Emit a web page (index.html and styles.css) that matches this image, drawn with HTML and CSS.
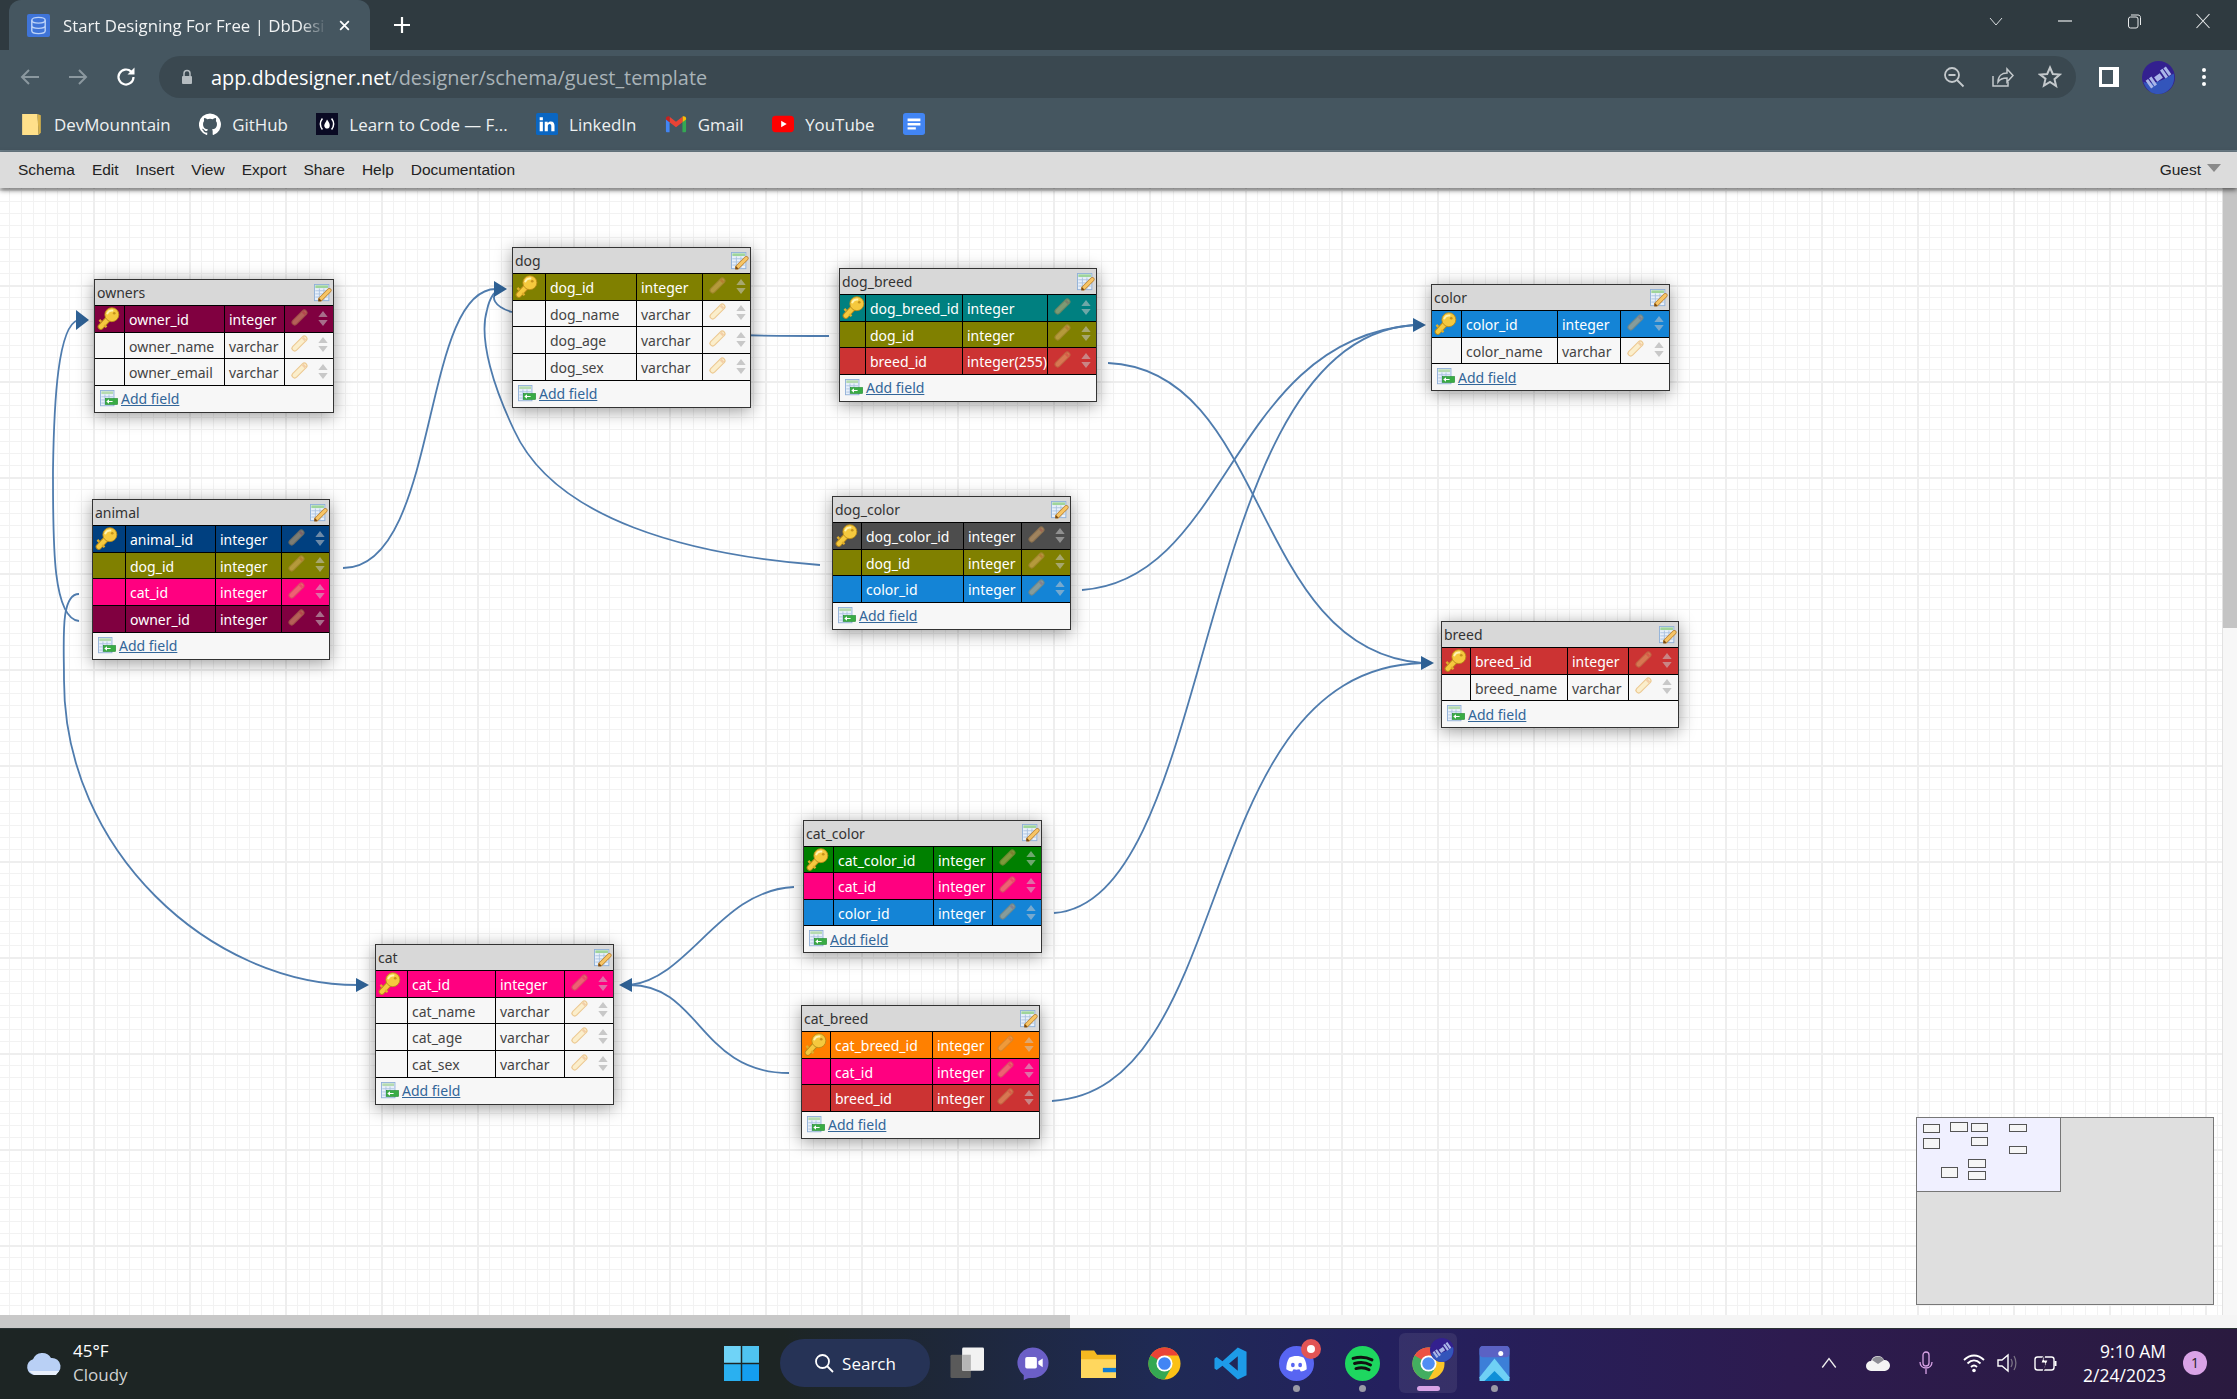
FILE: index.html
```html
<!DOCTYPE html>
<html lang="en">
<head>
    <meta charset="UTF-8">
    <meta name="viewport" content="width=device-width, initial-scale=1.0">
    <title>Start Designing For Free | DbDesigner</title>
    <link rel="stylesheet" href="styles.css">
</head>
<body>
    <!-- icon sprite -->
    <svg class="sprite" width="0" height="0">
        <symbol id="key" viewBox="0 0 24 24">
            <path d="M12 12L4 20.500" stroke="#b98a18" stroke-width="6.500" stroke-linecap="round"/>
            <path d="M12 12L4 20.500" stroke="#f5c93e" stroke-width="4.600" stroke-linecap="round"/>
            <path d="M7.500 19l2.500 2M4.500 15.500l-2-2" stroke="#e0ae2a" stroke-width="2.400"/>
            <circle cx="15.500" cy="8" r="7.300" fill="#f5c93e" stroke="#b98a18" stroke-width=".9"/>
            <path d="M10.500 7.500c1-3 3.500-4.300 6.500-3.800" fill="none" stroke="#fff3b0" stroke-width="2"/>
            <circle cx="18" cy="6.500" r="1.400" fill="#c4921c"/>
        </symbol>
        <symbol id="pen" viewBox="0 0 16 16">
            <path class="pen-edge" d="M3.500 12.500L12.500 3.500" stroke-width="6" stroke-linecap="round"/>
            <path class="pen-body" d="M3.500 12.500L12.500 3.500" stroke-width="4" stroke-linecap="round"/>
            <path class="pen-tip" d="M11 2.500l2.500 2.500" stroke-width="2.400"/>
        </symbol>
        <symbol id="updown" viewBox="0 0 10 16">
            <path d="M5 0l5 6.500H0zM5 16l-5-6.500h10z" fill="#c8c8c8"/>
        </symbol>
        <symbol id="tbledit" viewBox="0 0 20 20">
            <rect x=".5" y=".5" width="16" height="18" fill="#e8f0fa" stroke="#8fb0d8"/>
            <rect x="1.500" y="1.500" width="14" height="3" fill="#9fd59a"/>
            <path d="M1.500 7.500h14M1.500 11h14M1.500 14.500h14M6 5v13M11 5v13" stroke="#a9c2e0" stroke-width="1"/>
            <path d="M7 17L17 7" stroke="#b98032" stroke-width="5" stroke-linecap="round"/>
            <path d="M7 17L17 7" stroke="#f7c566" stroke-width="3.400" stroke-linecap="round"/>
            <path d="M4.500 19.500l1-4 3 3z" fill="#7a4a12"/>
        </symbol>
        <symbol id="addrow" viewBox="0 0 20 20">
            <rect x=".5" y=".5" width="15" height="17" fill="#e8f0fa" stroke="#8fb0d8"/>
            <rect x="1.500" y="1.500" width="13" height="3" fill="#b5dbb0"/>
            <path d="M1.500 7.500h13M1.500 11h13M1.500 14.500h13M5.500 5v12M10 5v12" stroke="#a9c2e0" stroke-width="1"/>
            <rect x="6" y="9.500" width="13.500" height="6.500" fill="#39ac45" stroke="#1f8a2c" stroke-width=".7"/>
            <path d="M7 12.750l3-2.500v5zM10 12.250h4v1h-4z" fill="#fff"/>
        </symbol>
        <symbol id="chrome" viewBox="0 0 24 24">
            <circle cx="12" cy="12" r="11" fill="#fbc116"/>
            <path d="M2.470 6.500A11 11 0 0 1 21.530 6.500H12L7.240 14.750z" fill="#ea4335"/>
            <path d="M2.470 6.500A11 11 0 0 0 12 23L16.760 14.750 12 12z" fill="#34a853"/>
            <circle cx="12" cy="12" r="5.500" fill="#fff"/>
            <circle cx="12" cy="12" r="4.300" fill="#4285f4"/>
        </symbol>
        <symbol id="nasa" viewBox="0 0 24 24">
            <circle cx="12" cy="12" r="12" fill="#33208f"/>
            <path d="M1 15c6 3 16-2 22-6 2 8-4 15-11 15C7 24 3 21 1 15z" fill="#3355bb"/>
            <g transform="rotate(-35 12 12)" fill="#aab6e8">
                <rect x="3" y="8.500" width="2.200" height="7"/>
                <rect x="6" y="8.500" width="2.200" height="7"/>
                <rect x="9.500" y="10" width="5" height="4"/>
                <rect x="15.800" y="8.500" width="2.200" height="7"/>
                <rect x="18.800" y="8.500" width="2.200" height="7"/>
            </g>
        </symbol>
    </svg>

    <div class="tabstrip">
        <div class="tab">
            <svg class="tab-icon" viewBox="0 0 24 24"><rect width="24" height="24" rx="2" fill="#3f74d8"/><ellipse cx="12" cy="6.500" rx="7" ry="3" fill="none" stroke="#bcd2f7" stroke-width="1.500"/><path d="M5 6.500v11c0 1.700 3 3 7 3s7-1.300 7-3v-11M5 12c0 1.700 3 3 7 3s7-1.300 7-3" fill="none" stroke="#bcd2f7" stroke-width="1.500"/></svg>
            <span class="tab-title">Start Designing For Free | DbDesi</span>
            <svg class="tab-close" viewBox="0 0 12 12"><path d="M2 2l8 8M10 2l-8 8" stroke="#fff" stroke-width="1.600"/></svg>
        </div>
        <svg class="new-tab" viewBox="0 0 18 18"><path d="M9 1v16M1 9h16" stroke="#fff" stroke-width="2.200"/></svg>
        <div class="winctl">
            <svg viewBox="0 0 16 16"><path d="M2 5l6 7 6-7" fill="none" stroke="#d8dcde" stroke-width="1"/></svg>
            <svg viewBox="0 0 16 16"><path d="M1 8h14" stroke="#e8eaeb" stroke-width="1.200"/></svg>
            <svg viewBox="0 0 16 16"><rect x="2.500" y="4" width="9.500" height="11" rx="2" fill="none" stroke="#e8eaeb"/><path d="M5 2h7c1.500 0 2.500 1 2.500 2.500V12" fill="none" stroke="#e8eaeb"/></svg>
            <svg viewBox="0 0 16 16"><path d="M1.500 1l13 14M14.500 1l-13 14" stroke="#e8eaeb" stroke-width="1.100"/></svg>
        </div>
    </div>

    <div class="toolbar">
        <svg class="nav dim" viewBox="0 0 24 24"><path d="M21 12H4M11 5l-7 7 7 7" fill="none" stroke="#8b989f" stroke-width="2"/></svg>
        <svg class="nav dim" viewBox="0 0 24 24"><path d="M3 12h17M13 5l7 7-7 7" fill="none" stroke="#8b989f" stroke-width="2"/></svg>
        <svg class="nav" viewBox="0 0 24 24"><path d="M19.500 12a7.500 7.500 0 1 1-2.300-5.400" fill="none" stroke="#fff" stroke-width="2.200"/><path d="M20.500 2.500v7h-7z" fill="#fff"/></svg>
        <div class="omnibox">
            <svg class="lock" viewBox="0 0 12 16"><path d="M3 7V4.500a3 3 0 0 1 6 0V7" fill="none" stroke="#b5bcc0" stroke-width="1.500"/><rect x="1" y="7" width="10" height="8" rx="1" fill="#b5bcc0"/></svg>
            <span class="url"><span class="host">app.dbdesigner.net</span>/designer/schema/guest_template</span>
            <div class="omni-icons">
                <svg viewBox="0 0 24 24"><circle cx="10" cy="10" r="7" fill="none" stroke="#c4c9cc" stroke-width="1.800"/><path d="M6.500 10h7M15 15l6.500 6.500" stroke="#c4c9cc" stroke-width="1.800"/></svg>
                <svg viewBox="0 0 24 24"><path d="M3 11v10h15v-4" fill="none" stroke="#c4c9cc" stroke-width="1.500"/><path d="M8 17c0-6 4-9 9-9V4l6 6.500-6 6.500v-4c-4 0-7 1-9 4z" fill="none" stroke="#c4c9cc" stroke-width="1.500"/></svg>
                <svg viewBox="0 0 24 24"><path d="M12 2.500l2.800 6.500 7 .6-5.300 4.600 1.600 6.900L12 17l-6.100 3.600 1.600-6.900L2.200 9.600l7-.6z" fill="none" stroke="#c4c9cc" stroke-width="2"/></svg>
            </div>
        </div>
        <svg class="sidepanel" viewBox="0 0 20 20"><path d="M0 0h20v20H0zM3 3v14h11V3z" fill="#fff" fill-rule="evenodd"/></svg>
        <svg class="avatar"><use href="#nasa"/></svg>
        <svg class="kebab" viewBox="0 0 6 20"><circle cx="3" cy="3" r="2" fill="#fff"/><circle cx="3" cy="10" r="2" fill="#fff"/><circle cx="3" cy="17" r="2" fill="#fff"/></svg>
    </div>

    <div class="bookmarks">
        <div class="bm"><svg viewBox="0 0 18 20"><path d="M0 1h14l1 19H0z" fill="#ffe08a"/><path d="M14 1l3 1v16l-2 2z" fill="#d8b24a"/></svg>DevMounntain</div>
        <div class="bm"><svg viewBox="0 0 24 24"><path fill="#fff" d="M12 .5a12 12 0 0 0-3.800 23.400c.6.100.8-.3.800-.6v-2c-3.300.7-4-1.600-4-1.600-.5-1.400-1.300-1.800-1.300-1.800-1.100-.7.100-.7.100-.7 1.200.1 1.800 1.200 1.800 1.200 1.100 1.800 2.800 1.300 3.500 1 .1-.8.400-1.300.8-1.600-2.700-.3-5.500-1.300-5.500-5.900 0-1.300.5-2.400 1.200-3.200-.1-.3-.5-1.500.1-3.200 0 0 1-.3 3.300 1.200a11.500 11.500 0 0 1 6 0c2.300-1.500 3.300-1.200 3.300-1.200.7 1.700.2 2.900.1 3.200.8.800 1.200 1.900 1.200 3.200 0 4.600-2.800 5.600-5.500 5.900.4.400.8 1.100.8 2.200v3.300c0 .3.200.7.800.6A12 12 0 0 0 12 .5z"/></svg>GitHub</div>
        <div class="bm"><svg viewBox="0 0 24 24"><rect width="24" height="24" fill="#0a0a23"/><path d="M7 6C4 10 4 14 7 18M17 6c3 4 3 8 0 12" fill="none" stroke="#fff" stroke-width="1.600"/><path d="M12 7c2 3 3 4 3 6.500S13.500 17 12 17s-3-1.500-3-3.500S11 10 12 7z" fill="#fff"/></svg>Learn to Code — F...</div>
        <div class="bm"><svg viewBox="0 0 24 24"><rect width="24" height="24" rx="2" fill="#0a66c2"/><path d="M4 9.500h3.500V20H4zM4 4.500h3.500V8H4zM9.500 9.500h3.200V11c.8-1.100 2-1.800 3.500-1.800 3 0 4 2 4 4.800v6h-3.500v-5.500c0-1.500-.5-2.500-1.800-2.500s-2 1-2 2.500V20H9.500z" fill="#fff"/></svg>LinkedIn</div>
        <div class="bm"><svg viewBox="0 0 24 20"><path d="M1 4v14c0 .6.400 1 1 1h3V8z" fill="#4285f4"/><path d="M23 4v14c0 .6-.4 1-1 1h-3V8z" fill="#34a853"/><path d="M19 2v6l4-3V4c0-2-2.500-3-4-2z" fill="#fbbc04"/><path d="M5 8l7 5.500L19 8V2l-7 5.500L5 2z" fill="#ea4335"/><path d="M1 4c0-2 2.500-3 4-2v6L1 5z" fill="#c5221f"/></svg>Gmail</div>
        <div class="bm"><svg viewBox="0 0 24 24"><rect y="3" width="24" height="18" rx="4" fill="#f00"/><path d="M10 8.500l6 3.500-6 3.500z" fill="#fff"/></svg>YouTube</div>
        <div class="bm"><svg viewBox="0 0 24 24"><rect width="24" height="24" rx="3" fill="#4285f4"/><path d="M5 6h14v3H5zM5 11h14v2.500H5zM5 15.500h9V18H5z" fill="#fff"/></svg></div>
    </div>

    <div class="menubar">
        <span>Schema</span><span>Edit</span><span>Insert</span><span>View</span><span>Export</span><span>Share</span><span>Help</span><span>Documentation</span>
        <span class="guest">Guest<i class="caret"></i></span>
    </div>

    <div class="workspace">
        <div class="canvas">
            <svg class="links" viewBox="0 188 2222 1127" width="2222" height="1127">
                <path d="M79 621C52 618 53 540 53 470C54 400 58 326 78 320"/>
                <path d="M79 594C60 594 64 640 64 680C64 850 210 985 358 985"/>
                <path d="M343 568C440 568 420 289 496 289"/>
                <path d="M820 565C690 555 555 520 514 430C495 390 478 340 487 310C490 296 496 290 500 289"/>
                <path d="M829 336C700 336 580 332 512 312C495 307 488 297 500 289"/>
                <path d="M1108 363C1270 370 1250 650 1422 663"/>
                <path d="M1052 1101C1240 1090 1190 670 1422 663"/>
                <path d="M1082 590C1230 580 1230 340 1414 325"/>
                <path d="M1054 913C1220 900 1190 340 1414 325"/>
                <path d="M794 887C720 890 690 978 630 985"/>
                <path d="M789 1073C700 1073 700 985 630 985"/>
                <g class="heads">
                    <path d="M89 320l-13-10v20z"/>
                    <path d="M369 985l-13-7v14z"/>
                    <path d="M507 289l-13-8v16z"/>
                    <path d="M1426 325l-13-7v14z"/>
                    <path d="M1434 663l-13-7v14z"/>
                    <path d="M619 985l13-7v14z"/>
                </g>
            </svg>

            <div class="tbl t-owners">
                <div class="tbl-head">owners<svg class="ico-edit"><use href="#tbledit"/></svg></div>
                <div class="row maroon"><div class="c-key"><svg><use href="#key"/></svg></div><div>owner_id</div><div>integer</div><div class="c-act"><svg class="pen"><use href="#pen"/></svg><svg class="ud"><use href="#updown"/></svg></div></div>
                <div class="row"><div class="c-key"></div><div>owner_name</div><div>varchar</div><div class="c-act"><svg class="pen"><use href="#pen"/></svg><svg class="ud"><use href="#updown"/></svg></div></div>
                <div class="row"><div class="c-key"></div><div>owner_email</div><div>varchar</div><div class="c-act"><svg class="pen"><use href="#pen"/></svg><svg class="ud"><use href="#updown"/></svg></div></div>
                <div class="tbl-foot"><svg><use href="#addrow"/></svg><a>Add field</a></div>
            </div>

            <div class="tbl t-animal">
                <div class="tbl-head">animal<svg class="ico-edit"><use href="#tbledit"/></svg></div>
                <div class="row navy"><div class="c-key"><svg><use href="#key"/></svg></div><div>animal_id</div><div>integer</div><div class="c-act"><svg class="pen"><use href="#pen"/></svg><svg class="ud"><use href="#updown"/></svg></div></div>
                <div class="row olive"><div class="c-key"></div><div>dog_id</div><div>integer</div><div class="c-act"><svg class="pen"><use href="#pen"/></svg><svg class="ud"><use href="#updown"/></svg></div></div>
                <div class="row pink"><div class="c-key"></div><div>cat_id</div><div>integer</div><div class="c-act"><svg class="pen"><use href="#pen"/></svg><svg class="ud"><use href="#updown"/></svg></div></div>
                <div class="row maroon"><div class="c-key"></div><div>owner_id</div><div>integer</div><div class="c-act"><svg class="pen"><use href="#pen"/></svg><svg class="ud"><use href="#updown"/></svg></div></div>
                <div class="tbl-foot"><svg><use href="#addrow"/></svg><a>Add field</a></div>
            </div>

            <div class="tbl t-dog">
                <div class="tbl-head">dog<svg class="ico-edit"><use href="#tbledit"/></svg></div>
                <div class="row olive"><div class="c-key"><svg><use href="#key"/></svg></div><div>dog_id</div><div>integer</div><div class="c-act"><svg class="pen"><use href="#pen"/></svg><svg class="ud"><use href="#updown"/></svg></div></div>
                <div class="row"><div class="c-key"></div><div>dog_name</div><div>varchar</div><div class="c-act"><svg class="pen"><use href="#pen"/></svg><svg class="ud"><use href="#updown"/></svg></div></div>
                <div class="row"><div class="c-key"></div><div>dog_age</div><div>varchar</div><div class="c-act"><svg class="pen"><use href="#pen"/></svg><svg class="ud"><use href="#updown"/></svg></div></div>
                <div class="row"><div class="c-key"></div><div>dog_sex</div><div>varchar</div><div class="c-act"><svg class="pen"><use href="#pen"/></svg><svg class="ud"><use href="#updown"/></svg></div></div>
                <div class="tbl-foot"><svg><use href="#addrow"/></svg><a>Add field</a></div>
            </div>

            <div class="tbl t-dog-breed">
                <div class="tbl-head">dog_breed<svg class="ico-edit"><use href="#tbledit"/></svg></div>
                <div class="row teal"><div class="c-key"><svg><use href="#key"/></svg></div><div>dog_breed_id</div><div>integer</div><div class="c-act"><svg class="pen"><use href="#pen"/></svg><svg class="ud"><use href="#updown"/></svg></div></div>
                <div class="row olive"><div class="c-key"></div><div>dog_id</div><div>integer</div><div class="c-act"><svg class="pen"><use href="#pen"/></svg><svg class="ud"><use href="#updown"/></svg></div></div>
                <div class="row red"><div class="c-key"></div><div>breed_id</div><div>integer(255)</div><div class="c-act"><svg class="pen"><use href="#pen"/></svg><svg class="ud"><use href="#updown"/></svg></div></div>
                <div class="tbl-foot"><svg><use href="#addrow"/></svg><a>Add field</a></div>
            </div>

            <div class="tbl t-color">
                <div class="tbl-head">color<svg class="ico-edit"><use href="#tbledit"/></svg></div>
                <div class="row blue"><div class="c-key"><svg><use href="#key"/></svg></div><div>color_id</div><div>integer</div><div class="c-act"><svg class="pen"><use href="#pen"/></svg><svg class="ud"><use href="#updown"/></svg></div></div>
                <div class="row"><div class="c-key"></div><div>color_name</div><div>varchar</div><div class="c-act"><svg class="pen"><use href="#pen"/></svg><svg class="ud"><use href="#updown"/></svg></div></div>
                <div class="tbl-foot"><svg><use href="#addrow"/></svg><a>Add field</a></div>
            </div>

            <div class="tbl t-dog-color">
                <div class="tbl-head">dog_color<svg class="ico-edit"><use href="#tbledit"/></svg></div>
                <div class="row gray"><div class="c-key"><svg><use href="#key"/></svg></div><div>dog_color_id</div><div>integer</div><div class="c-act"><svg class="pen"><use href="#pen"/></svg><svg class="ud"><use href="#updown"/></svg></div></div>
                <div class="row olive"><div class="c-key"></div><div>dog_id</div><div>integer</div><div class="c-act"><svg class="pen"><use href="#pen"/></svg><svg class="ud"><use href="#updown"/></svg></div></div>
                <div class="row blue"><div class="c-key"></div><div>color_id</div><div>integer</div><div class="c-act"><svg class="pen"><use href="#pen"/></svg><svg class="ud"><use href="#updown"/></svg></div></div>
                <div class="tbl-foot"><svg><use href="#addrow"/></svg><a>Add field</a></div>
            </div>

            <div class="tbl t-breed">
                <div class="tbl-head">breed<svg class="ico-edit"><use href="#tbledit"/></svg></div>
                <div class="row red"><div class="c-key"><svg><use href="#key"/></svg></div><div>breed_id</div><div>integer</div><div class="c-act"><svg class="pen"><use href="#pen"/></svg><svg class="ud"><use href="#updown"/></svg></div></div>
                <div class="row"><div class="c-key"></div><div>breed_name</div><div>varchar</div><div class="c-act"><svg class="pen"><use href="#pen"/></svg><svg class="ud"><use href="#updown"/></svg></div></div>
                <div class="tbl-foot"><svg><use href="#addrow"/></svg><a>Add field</a></div>
            </div>

            <div class="tbl t-cat-color">
                <div class="tbl-head">cat_color<svg class="ico-edit"><use href="#tbledit"/></svg></div>
                <div class="row green"><div class="c-key"><svg><use href="#key"/></svg></div><div>cat_color_id</div><div>integer</div><div class="c-act"><svg class="pen"><use href="#pen"/></svg><svg class="ud"><use href="#updown"/></svg></div></div>
                <div class="row pink"><div class="c-key"></div><div>cat_id</div><div>integer</div><div class="c-act"><svg class="pen"><use href="#pen"/></svg><svg class="ud"><use href="#updown"/></svg></div></div>
                <div class="row blue"><div class="c-key"></div><div>color_id</div><div>integer</div><div class="c-act"><svg class="pen"><use href="#pen"/></svg><svg class="ud"><use href="#updown"/></svg></div></div>
                <div class="tbl-foot"><svg><use href="#addrow"/></svg><a>Add field</a></div>
            </div>

            <div class="tbl t-cat">
                <div class="tbl-head">cat<svg class="ico-edit"><use href="#tbledit"/></svg></div>
                <div class="row pink"><div class="c-key"><svg><use href="#key"/></svg></div><div>cat_id</div><div>integer</div><div class="c-act"><svg class="pen"><use href="#pen"/></svg><svg class="ud"><use href="#updown"/></svg></div></div>
                <div class="row"><div class="c-key"></div><div>cat_name</div><div>varchar</div><div class="c-act"><svg class="pen"><use href="#pen"/></svg><svg class="ud"><use href="#updown"/></svg></div></div>
                <div class="row"><div class="c-key"></div><div>cat_age</div><div>varchar</div><div class="c-act"><svg class="pen"><use href="#pen"/></svg><svg class="ud"><use href="#updown"/></svg></div></div>
                <div class="row"><div class="c-key"></div><div>cat_sex</div><div>varchar</div><div class="c-act"><svg class="pen"><use href="#pen"/></svg><svg class="ud"><use href="#updown"/></svg></div></div>
                <div class="tbl-foot"><svg><use href="#addrow"/></svg><a>Add field</a></div>
            </div>

            <div class="tbl t-cat-breed">
                <div class="tbl-head">cat_breed<svg class="ico-edit"><use href="#tbledit"/></svg></div>
                <div class="row orange"><div class="c-key"><svg><use href="#key"/></svg></div><div>cat_breed_id</div><div>integer</div><div class="c-act"><svg class="pen"><use href="#pen"/></svg><svg class="ud"><use href="#updown"/></svg></div></div>
                <div class="row pink"><div class="c-key"></div><div>cat_id</div><div>integer</div><div class="c-act"><svg class="pen"><use href="#pen"/></svg><svg class="ud"><use href="#updown"/></svg></div></div>
                <div class="row red"><div class="c-key"></div><div>breed_id</div><div>integer</div><div class="c-act"><svg class="pen"><use href="#pen"/></svg><svg class="ud"><use href="#updown"/></svg></div></div>
                <div class="tbl-foot"><svg><use href="#addrow"/></svg><a>Add field</a></div>
            </div>

            <!-- minimap -->
            <div class="minimap">
                <div class="viewport"></div>
                <i class="mm m1"></i><i class="mm m2"></i><i class="mm m3"></i><i class="mm m4"></i><i class="mm m5"></i>
                <i class="mm m6"></i><i class="mm m7"></i><i class="mm m8"></i><i class="mm m9"></i><i class="mm m10"></i>
            </div>
        </div>
        <div class="vscroll"><div class="vthumb"></div></div>
    </div>
    <div class="hscroll"><div class="hthumb"></div></div>

    <div class="taskbar">
        <div class="weather">
            <svg viewBox="0 0 36 26"><path d="M9 25a8 8 0 0 1-2-15.700A10 10 0 0 1 25 8a8.500 8.500 0 0 1 2 17z" fill="#b9d0f5"/><path d="M3 21h30l-3 4H8z" fill="#e8effb"/></svg>
            <div class="weather-text"><span>45°F</span><span class="dim-text">Cloudy</span></div>
        </div>
        <div class="apps">
            <svg class="app" viewBox="0 0 24 24"><path d="M0 0h11.500v11.500H0z" fill="#6fd3f7"/><path d="M12.500 0H24v11.500H12.500z" fill="#4fc3f0"/><path d="M0 12.500h11.500V24H0z" fill="#2ab0f0"/><path d="M12.500 12.500H24V24H12.500z" fill="#149ef0"/></svg>
            <div class="search">
                <svg viewBox="0 0 20 20"><circle cx="8.500" cy="8.500" r="6.500" fill="none" stroke="#fff" stroke-width="1.800"/><path d="M13 13l6 6" stroke="#fff" stroke-width="1.800"/></svg>
                <span>Search</span>
            </div>
            <svg class="app" viewBox="0 0 24 24"><rect x="1" y="6" width="14" height="16" rx="1" fill="#5a5a5a"/><rect x="9" y="1" width="15" height="16" rx="1" fill="#f2f2f2"/><rect x="9" y="6" width="6" height="11" fill="#b5b5b5"/></svg>
            <svg class="app" viewBox="0 0 24 24"><path d="M12 1a11 10.500 0 0 1 0 21c-2 0-4 0-6 1.500V20A10.500 10.500 0 0 1 12 1z" fill="#6b5fc7"/><rect x="7" y="7.500" width="8" height="8" rx="1.200" fill="#fff"/><path d="M16 10.500l3-2v6l-3-2z" fill="#fff"/></svg>
            <svg class="app" viewBox="0 0 24 24"><path d="M0 3h9l2 3h13v16H0z" fill="#f5b921"/><path d="M0 9h24v13H0z" fill="#ffd75e"/><path d="M15 15h9v3h-9z" fill="#0f7bd4"/></svg>
            <svg class="app"><use href="#chrome"/></svg>
            <svg class="app" viewBox="0 0 24 24"><path d="M17 1l6 3v16l-6 3L6.500 13.500 2.500 16.500 1 15.500V8.500L2.500 7.500 6.500 10.500zM17 7l-6 5 6 5z" fill="#1d9be8" fill-rule="evenodd"/></svg>
            <div class="app-wrap dot">
                <svg class="app" viewBox="0 0 24 24"><circle cx="12" cy="12" r="12" fill="#5865f2"/><path d="M7 8c3-1.500 7-1.500 10 0 1.500 2.500 2 5 2 8-1.500 1-3 1.500-4 1.500l-1-1.500c-1.500.3-2.500.3-4 0l-1 1.500c-1 0-2.500-.5-4-1.500 0-3 .5-5.500 2-8z" fill="#fff"/><ellipse cx="9.500" cy="13" rx="1.300" ry="1.600" fill="#5865f2"/><ellipse cx="14.500" cy="13" rx="1.300" ry="1.600" fill="#5865f2"/></svg>
                <i class="notif"></i>
            </div>
            <div class="app-wrap dot">
                <svg class="app" viewBox="0 0 24 24"><circle cx="12" cy="12" r="12" fill="#1ed760"/><path d="M5.500 8.500c4.500-1.200 9-1 13 1M6.500 12c3.800-1 7.800-.8 11 1M7.500 15.500c3-.8 6.500-.6 9 .8" fill="none" stroke="#111" stroke-width="2" stroke-linecap="round"/></svg>
            </div>
            <div class="app-wrap active">
                <svg class="app"><use href="#chrome"/></svg>
                <svg class="app-badge"><use href="#nasa"/></svg>
            </div>
            <div class="app-wrap dot">
                <svg class="app photos" viewBox="0 0 24 28"><rect width="24" height="28" rx="3" fill="#3c7fd8"/><rect width="24" height="9" rx="3" fill="#5b62c4"/><path d="M0 25l12-15 12 15v3H0z" fill="#6fd0f5"/><path d="M4 28l8-8 8 8z" fill="#0e8fd8"/><circle cx="17" cy="6" r="2" fill="#fff"/></svg>
            </div>
        </div>
        <div class="tray">
            <svg class="t-caret" viewBox="0 0 16 16"><path d="M2 12l6-8 6 8" fill="none" stroke="#eee" stroke-width="1.200"/></svg>
            <svg class="t-cloud" viewBox="0 0 26 20"><path d="M6 18a5 5 0 0 1 0-10 7 7 0 0 1 13-1 5.500 5.500 0 0 1 1 11z" fill="#f4f4f4"/><path d="M7 7a7 7 0 0 1 12 0l-6 4z" fill="#8d8d95"/></svg>
            <svg class="t-mic" viewBox="0 0 16 24"><rect x="5" y="1" width="6" height="14" rx="3" fill="none" stroke="#d9a3e6" stroke-width="1.300"/><path d="M2 11c0 8 12 8 12 0M8 18v5" fill="none" stroke="#d9a3e6" stroke-width="1.300"/></svg>
            <svg class="t-wifi" viewBox="0 0 24 24"><path d="M2 9c6-6 14-6 20 0M5.500 12.500c4-4 9-4 13 0M9 16c2-2 4-2 6 0" fill="none" stroke="#fff" stroke-width="1.800"/><circle cx="12" cy="19.500" r="1.800" fill="#fff"/></svg>
            <svg class="t-sound" viewBox="0 0 24 24"><path d="M3 9h4l6-5v16l-6-5H3z" fill="none" stroke="#fff" stroke-width="1.400"/><path d="M16 8c1.500 2.500 1.500 5.500 0 8M19 5c2.500 4 2.500 10 0 14" fill="none" stroke="#7b7485" stroke-width="1.300"/></svg>
            <svg class="t-batt" viewBox="0 0 26 24"><rect x="2" y="6" width="19" height="13" rx="2.500" fill="none" stroke="#fff" stroke-width="1.400"/><path d="M22.500 10v5" stroke="#fff" stroke-width="2"/><path d="M12 1L8 12h4l-2 9 5-12h-4z" fill="#fff" stroke="#2a1a3f"/></svg>
            <div class="clock"><span>9:10 AM</span><span>2/24/2023</span></div>
            <div class="notif-count">1</div>
        </div>
    </div>
</body>
</html>
```

FILE: styles.css
```css
* {
    box-sizing: border-box;
}

html, body {
    margin: 0;
    padding: 0;
}

body {
    width: 2237px;
    height: 1399px;
    overflow: hidden;
    display: flex;
    flex-direction: column;
    font-family: "Open Sans", "Noto Sans", sans-serif;
    background-color: #fff;
}

.sprite {
    position: absolute;
}

/* browser chrome */
.tabstrip {
    height: 50px;
    background-color: #2f3a40;
    display: flex;
    align-items: flex-end;
    padding-left: 9px;
    flex: none;
}

.tab {
    width: 361px;
    height: 50px;
    background-color: #455660;
    border-radius: 12px 12px 0 0;
    display: flex;
    align-items: center;
    padding: 0 19px 0 18px;
    color: #f1f3f4;
}

.tab-icon {
    width: 23px;
    height: 23px;
    flex: none;
}

.tab-title {
    width: 264px;
    margin-left: 13px;
    font-size: 16.800px;
    white-space: nowrap;
    -webkit-mask-image: linear-gradient(90deg, #000 90%, transparent);
    mask-image: linear-gradient(90deg, #000 90%, transparent);
}

.tab-close {
    width: 13px;
    height: 13px;
    margin-left: auto;
}

.new-tab {
    width: 18px;
    height: 18px;
    margin: 0 0 16px 23px;
}

.winctl {
    margin-left: auto;
    align-self: flex-start;
    display: flex;
    gap: 53px;
    padding: 13px 26px 0 0;
}

.winctl svg {
    width: 16px;
    height: 16px;
}

.toolbar {
    height: 56px;
    background-color: #455660;
    display: flex;
    align-items: center;
    padding: 0 22px 2px 18px;
    flex: none;
}

.nav {
    width: 24px;
    height: 24px;
    margin-right: 24px;
}

.nav:nth-child(3) {
    margin-right: 25px;
}

.omnibox {
    width: 1917px;
    height: 42px;
    border-radius: 21px;
    background-color: #3a4850;
    display: flex;
    align-items: center;
    padding: 0 14px 0 22px;
    margin-left: -4px;
}

.lock {
    width: 12px;
    height: 16px;
}

.url {
    margin-left: 18px;
    font-size: 19.850px;
    color: #a9b3b8;
}

.host {
    color: #fff;
}

.omni-icons {
    margin-left: auto;
    display: flex;
    gap: 24px;
}

.omni-icons svg {
    width: 24px;
    height: 24px;
}

.sidepanel {
    width: 20px;
    height: 20px;
    margin-left: 23px;
}

.avatar {
    width: 33px;
    height: 33px;
    margin-left: 23px;
}

.kebab {
    width: 6px;
    height: 20px;
    margin-left: 26px;
}

.bookmarks {
    height: 46px;
    background-color: #455660;
    border-bottom: 2px solid #6c7d87;
    display: flex;
    align-items: center;
    padding: 0 0 8px 21px;
    gap: 28.500px;
    font-size: 16.900px;
    color: #eef1f2;
    flex: none;
}

.bm {
    display: flex;
    align-items: center;
    gap: 11px;
    white-space: nowrap;
}

.bm svg {
    width: 22px;
    height: 22px;
}

.menubar {
    height: 36px;
    background-color: #dcdcdc;
    display: flex;
    align-items: center;
    padding: 0 0 0 18px;
    gap: 17px;
    font-family: "Liberation Sans", Arial, sans-serif;
    font-size: 15.500px;
    color: #222;
    box-shadow: 0 2px 5px rgba(0, 0, 0, .6);
    position: relative;
    z-index: 3;
    flex: none;
}

.guest {
    margin-left: auto;
    padding-right: 16px;
    display: flex;
    align-items: center;
    gap: 6px;
}

.caret {
    border-left: 7px solid transparent;
    border-right: 7px solid transparent;
    border-top: 8px solid #8a8a8a;
    margin-top: -4px;
}

/* designer area */
.workspace {
    flex: 1;
    display: flex;
    min-height: 0;
}

.canvas {
    flex: 1;
    position: relative;
    overflow: hidden;
    background-color: #fff;
    background-image:
        linear-gradient(#eeeeee 2px, transparent 2px),
        linear-gradient(90deg, #eeeeee 2px, transparent 2px),
        linear-gradient(#f2f2f2 1px, transparent 1px),
        linear-gradient(90deg, #f2f2f2 1px, transparent 1px);
    background-size: 96px 96px, 96px 96px, 12px 12px, 12px 12px;
    background-position: 0 1px, -3px 0, 0 1px, 9px 0;
}

.links {
    position: absolute;
    left: 0;
    top: 0;
}

.links path {
    fill: none;
    stroke: #4f7cae;
    stroke-width: 1.800;
}

.links .heads path {
    fill: #2f6296;
    stroke: none;
}

/* schema tables */
.tbl {
    position: absolute;
    width: var(--w);
    background-color: #f7f7f7;
    border: 1.500px solid #333;
    box-shadow: 0 3px 16px rgba(0, 0, 0, .4);
    font-family: "Noto Sans", sans-serif;
    font-size: 14px;
    color: #444;
}

.t-owners { left: 94px; top: 91px; --w: 240px; --k: 30px; --n: 100px; --t: 60px; }
.t-animal { left: 92px; top: 311px; --w: 238px; --k: 33px; --n: 90px; --t: 66px; }
.t-dog { left: 512px; top: 59px; --w: 239px; --k: 33px; --n: 91px; --t: 66px; }
.t-dog-breed { left: 839px; top: 80px; --w: 258px; --k: 26px; --n: 97px; --t: 85px; }
.t-color { left: 1431px; top: 96px; --w: 239px; --k: 30px; --n: 96px; --t: 63px; }
.t-dog-color { left: 832px; top: 308px; --w: 239px; --k: 29px; --n: 102px; --t: 58px; }
.t-breed { left: 1441px; top: 433px; --w: 238px; --k: 29px; --n: 97px; --t: 61px; }
.t-cat-color { left: 803px; top: 631.500px; --w: 239px; --k: 30px; --n: 100px; --t: 59px; }
.t-cat { left: 375px; top: 756px; --w: 239px; --k: 32px; --n: 88px; --t: 69px; }
.t-cat-breed { left: 801px; top: 817px; --w: 239px; --k: 29px; --n: 102px; --t: 58px; }

.tbl-head {
    height: 26px;
    background-color: #d8d8d8;
    display: flex;
    align-items: center;
    padding-left: 2px;
    color: #333;
    border-bottom: 1px solid #000;
}

.ico-edit {
    width: 18px;
    height: 18px;
    margin-left: auto;
    margin-right: 1px;
}

.row {
    height: 26.670px;
    display: grid;
    grid-template-columns: var(--k) var(--n) var(--t) 1fr;
    border-bottom: 1px solid #000;
    line-height: 27px;
    white-space: nowrap;
    --pen-edge: #ecc992;
    --pen-body: #fbeecb;
    --pen-tip: #f3cfa8;
}

.row > div {
    border-right: 1px solid #000;
    padding-left: 4px;
    overflow: hidden;
}

.row > .c-act {
    border-right: 0;
    padding: 0 0 0 6px;
    display: flex;
    align-items: center;
    gap: 10px;
}

.row > .c-key {
    padding: 1px 0 0 2px;
}

.c-key svg {
    width: 23px;
    height: 23px;
}

.pen {
    width: 17px;
    height: 17px;
    margin-top: -3px;
    flex: none;
}

.pen-edge { stroke: var(--pen-edge); }
.pen-body { stroke: var(--pen-body); }
.pen-tip { stroke: var(--pen-tip); }

.ud {
    width: 10px;
    height: 15px;
    margin-top: -1px;
    flex: none;
}

.maroon, .navy, .olive, .pink, .teal, .red, .blue, .gray, .green, .orange {
    color: #fff;
    --pen-edge: #b88a4e;
    --pen-body: #e2b06c;
    --pen-tip: #e0805a;
}

.maroon .c-act svg, .navy .c-act svg, .olive .c-act svg, .pink .c-act svg, .teal .c-act svg,
.red .c-act svg, .blue .c-act svg, .gray .c-act svg, .green .c-act svg, .orange .c-act svg {
    opacity: .55;
}

.maroon .ud, .navy .ud, .olive .ud, .pink .ud, .teal .ud,
.red .ud, .blue .ud, .gray .ud, .green .ud, .orange .ud {
    opacity: .35;
}

.maroon { background-color: #800040; }
.navy { background-color: #004080; }
.olive { background-color: #808000; }
.pink { background-color: #ff0080; }
.teal { background-color: #008080; }
.red { background-color: #cc3333; }
.blue { background-color: #1484d6; }
.gray { background-color: #4d4d4d; }
.green { background-color: #008000; }
.orange { background-color: #ff8000; }

.tbl-foot {
    height: 26px;
    display: flex;
    align-items: center;
    padding-left: 5px;
    gap: 3px;
}

.tbl-foot svg {
    width: 18px;
    height: 18px;
}

.tbl-foot a {
    color: #336699;
    text-decoration: underline;
}

/* minimap */
.minimap {
    position: absolute;
    left: 1916px;
    top: 929px;
    width: 298px;
    height: 188px;
    background-color: #dfdfdf;
    border: 1px solid #777;
}

.viewport {
    position: absolute;
    left: 0;
    top: 0;
    width: 144px;
    height: 74px;
    background-color: #f0f0ff;
    border-right: 1px solid #777;
    border-bottom: 1px solid #777;
}

.mm {
    position: absolute;
    background-color: #f6f6f6;
    border: 1px solid #555;
}

.m1 { left: 6px; top: 6px; width: 17px; height: 9px; }
.m2 { left: 6px; top: 20px; width: 17px; height: 11px; }
.m3 { left: 33px; top: 4px; width: 18px; height: 10px; }
.m4 { left: 54px; top: 5px; width: 17px; height: 9px; }
.m5 { left: 54px; top: 19px; width: 17px; height: 9px; }
.m6 { left: 92px; top: 6px; width: 18px; height: 8px; }
.m7 { left: 92px; top: 28px; width: 18px; height: 8px; }
.m8 { left: 24px; top: 49px; width: 17px; height: 11px; }
.m9 { left: 51px; top: 41px; width: 18px; height: 9px; }
.m10 { left: 51px; top: 53px; width: 18px; height: 9px; }

/* scrollbars */
.vscroll {
    width: 15px;
    background-color: #f7f7f7;
    border-left: 1px solid #e2e2e2;
}

.vthumb {
    height: 440px;
    background-color: #c4c4c4;
}

.hscroll {
    height: 13px;
    background-color: #f5f5f5;
    flex: none;
}

.hthumb {
    width: 1070px;
    height: 13px;
    background-color: #c8c8c8;
}

/* windows taskbar */
.taskbar {
    height: 71px;
    flex: none;
    display: flex;
    align-items: center;
    color: #fff;
    background: linear-gradient(90deg, #1d2524 0%, #1d2524 35%, #1f2a55 52%, #24205e 62%, #2d1b4f 80%, #2a1a3f 100%);
    border-top: 1px solid #2a3233;
    padding: 0 0 2px 26px;
    position: relative;
}

.weather {
    display: flex;
    align-items: center;
    gap: 11px;
    width: 698px;
}

.weather svg {
    width: 36px;
    height: 26px;
}

.weather-text {
    display: flex;
    flex-direction: column;
    font-size: 17px;
    line-height: 24px;
}

.dim-text {
    color: #cfd2d2;
}

.apps {
    display: flex;
    align-items: center;
    gap: 31px;
}

.app {
    width: 35px;
    height: 35px;
    display: block;
}

.photos {
    width: 31px;
    margin: 0 2px;
}

.apps > svg:first-child {
    margin-right: -10px;
}

.search {
    width: 150px;
    height: 48px;
    border-radius: 24px;
    background-color: #263356;
    display: flex;
    align-items: center;
    justify-content: center;
    gap: 8px;
    font-size: 17px;
    margin-right: -12px;
}

.search svg {
    width: 20px;
    height: 20px;
}

.app-wrap {
    position: relative;
}

.dot::after {
    content: "";
    position: absolute;
    left: 14px;
    top: 39px;
    width: 7px;
    height: 7px;
    border-radius: 50%;
    background-color: #9a9aa6;
}

.notif {
    position: absolute;
    left: 22px;
    top: -7px;
    width: 20px;
    height: 20px;
    border-radius: 50%;
    background-color: #fff;
    border: 6px solid #e25555;
}

.active::before {
    content: "";
    position: absolute;
    left: -12px;
    top: -13px;
    width: 58px;
    height: 60px;
    border-radius: 6px;
    background-color: rgba(255, 255, 255, .08);
}

.active::after {
    content: "";
    position: absolute;
    left: 6px;
    top: 40px;
    width: 23px;
    height: 5px;
    border-radius: 3px;
    background-color: #d9a3e6;
}

.app-badge {
    position: absolute;
    left: 19px;
    top: -8px;
    width: 24px;
    height: 24px;
}

.tray {
    position: absolute;
    left: 1820px;
    top: 0;
    width: 387px;
    height: 68px;
    display: flex;
    align-items: center;
}

.tray > svg {
    height: 24px;
    flex: none;
}

.t-caret { width: 18px; }
.t-cloud { width: 26px; margin-left: 27px; }
.t-mic { width: 20px; margin-left: 25px; }
.t-wifi { width: 24px; margin-left: 26px; }
.t-sound { width: 24px; margin-left: 9px; }
.t-batt { width: 26px; margin-left: 14px; }

.clock {
    display: flex;
    flex-direction: column;
    align-items: flex-end;
    font-size: 17.500px;
    line-height: 24px;
    margin-left: auto;
}

.notif-count {
    width: 24px;
    height: 24px;
    border-radius: 50%;
    background-color: #d9a3e6;
    color: #222;
    font-size: 14px;
    text-align: center;
    line-height: 24px;
    margin-left: 17px;
}
```
